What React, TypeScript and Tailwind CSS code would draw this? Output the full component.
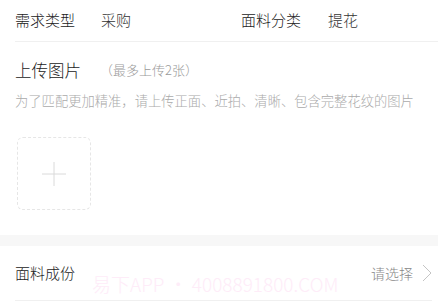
import React from "react";

export default function App() {
  const font = { fontFamily: '"Noto Sans CJK SC", "Noto Sans", sans-serif' };
  return (
    <div className="relative w-[438px] h-[306px] bg-white overflow-hidden font-light" style={font}>
      {/* top row */}
      <div className="pl-[15px]">
        <div className="flex items-center h-[42px] border-b border-[#f0f0f0]">
          <div className="flex items-center w-[226px]">
            <span className="w-[86px] text-[15px] text-[#222]">需求类型</span>
            <span className="text-[15px] text-[#333]">采购</span>
          </div>
          <div className="flex items-center">
            <span className="w-[87px] text-[15px] text-[#222]">面料分类</span>
            <span className="text-[15px] text-[#333]">提花</span>
          </div>
        </div>
      </div>

      {/* upload section */}
      <div className="h-[193px] px-[15px] pt-[16px]">
        <div className="flex items-center h-[24px]">
          <span className="text-[16.5px] text-[#222] leading-[24px]">上传图片</span>
          <span className="ml-[19px] text-[13px] text-[#999] leading-[24px]">（最多上传2张）</span>
        </div>
        <div className="mt-[9px] text-[13.3px] leading-[20px] text-[#aaa] whitespace-nowrap">
          为了匹配更加精准，请上传正面、近拍、清晰、包含完整花纹的图片
        </div>
        <div className="mt-[26px] ml-[2px] w-[74px] h-[73px] rounded-[6px] border border-dashed border-[#e6e6e6] flex items-center justify-center">
          <svg width="24" height="24" viewBox="0 0 24 24">
            <path d="M12 0V24M0 12H24" stroke="#dadada" strokeWidth="1" fill="none" />
          </svg>
        </div>
      </div>

      {/* gray band */}
      <div className="h-[11px] bg-[#f7f7f7]" />

      {/* composition row */}
      <div className="pl-[15px] pr-[6px]">
        <div className="flex items-center justify-between h-[55px] border-b border-[#f0f0f0]">
          <span className="text-[15px] text-[#222]">面料成份</span>
          <div className="flex items-center">
            <span className="text-[14px] text-[#888]">请选择</span>
            <svg className="ml-[9px]" width="10" height="18" viewBox="0 0 10 18">
              <path d="M1 1L9 9L1 17" stroke="#c4c4c4" strokeWidth="1" fill="none" />
            </svg>
          </div>
        </div>
      </div>

      {/* watermark */}
      <div className="absolute left-[92px] top-[272px] text-[19px] leading-[24px] text-[#feecf8] whitespace-nowrap pointer-events-none">
        易下APP • 4008891800.COM
      </div>
    </div>
  );
}
